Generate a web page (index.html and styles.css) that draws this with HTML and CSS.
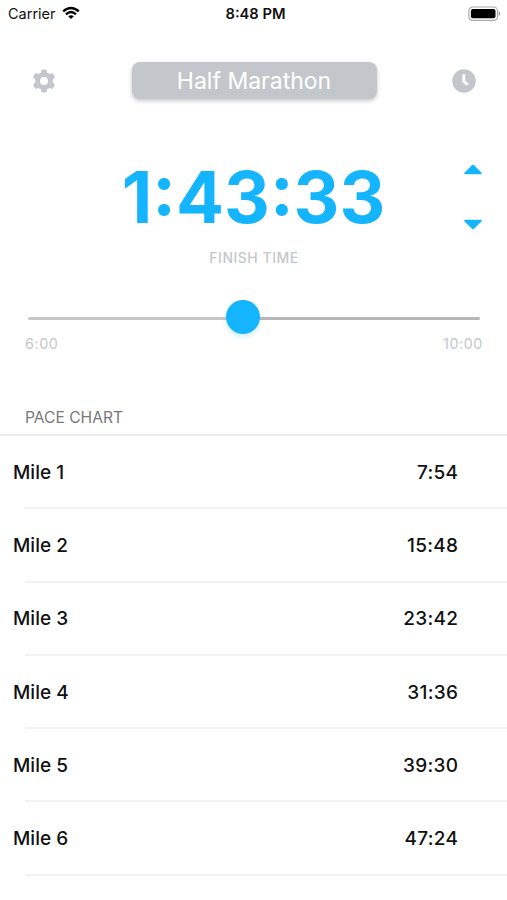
FILE: index.html
```html
<!DOCTYPE html>
<html lang="en">
<head>
<meta charset="utf-8">
<title>Race Pace</title>
<link rel="stylesheet" href="styles.css">
</head>
<body>
<div class="status">
  <div class="carrier"><span>Carrier</span>
    <svg width="18" height="14" viewBox="0 0 18 14" fill="none" stroke="#000" stroke-width="2.4"><path d="M1.2 5.3Q9 -1.5 16.8 5.3"/><path d="M4 8.3Q9 3.9 14 8.3"/><path d="M6.2 10.3Q9 8 11.8 10.3L9 13Z" fill="#000" stroke="none"/></svg>
  </div>
  <div class="clock">8:48 PM</div>
  <svg class="battery" width="33" height="16" viewBox="0 0 33 16"><rect x=".9" y="1" width="28.6" height="13.4" rx="3.8" fill="#fff" stroke="#aaa" stroke-width="1.2"/><rect x="2.9" y="3.1" width="24.6" height="9.2" rx="2" fill="#000"/><path d="M30.7 5.6Q32.3 6.2 32.3 7.8T30.7 10Z" fill="#999"/></svg>
</div>
<header class="toolbar">
  <svg width="24" height="24" viewBox="0 0 24 24" fill="#c3c7cb"><path fill-rule="evenodd" d="M9.5.8Q12 .1 14.5.8L15.1 3.7Q16.5 4.2 17.6 5.1L20.4 4.1Q22.2 6 22.9 8.5L20.7 10.5Q20.9 12 20.7 13.5L22.9 15.5Q22.2 18 20.4 19.9L17.6 18.9Q16.5 19.8 15.1 20.3L14.5 23.2Q12 23.9 9.5 23.2L8.9 20.3Q7.5 19.8 6.4 18.9L3.6 19.9Q1.8 18 1.1 15.5L3.3 13.5Q3.1 12 3.3 10.5L1.1 8.5Q1.8 6 3.6 4.1L6.4 5.1Q7.5 4.2 8.9 3.7ZM12 8A4 4 0 1 0 12 16A4 4 0 1 0 12 8Z"/></svg>
  <div class="race">Half Marathon</div>
  <svg width="24" height="24" viewBox="0 0 24 24"><circle cx="12" cy="12" r="11.8" fill="#c3c7cb"/><path d="M11.8 5.3V12.3L15.8 15.8" fill="none" stroke="#fff" stroke-width="2.8"/></svg>
</header>
<section class="finish">
  <div class="time">1:43:33</div>
  <div class="stepper">
    <svg width="18" height="11" viewBox="0 0 18 11"><path d="M.6 8.6L8 1.2Q9 .2 10 1.2L17.4 8.6Q18.4 10.2 16.8 10.2H1.2Q-.4 10.2.6 8.6Z" fill="#14b4ff"/></svg>
    <svg width="18" height="11" viewBox="0 0 18 11"><path d="M.6 2.4L8 9.8Q9 10.8 10 9.8L17.4 2.4Q18.4 .8 16.8 .8H1.2Q-.4 .8.6 2.4Z" fill="#14b4ff"/></svg>
  </div>
</section>
<div class="caption">FINISH TIME</div>
<div class="slider"><div class="track"></div><div class="thumb"></div></div>
<div class="range"><span>6:00</span><span>10:00</span></div>
<h2 class="heading"><span>PACE CHART</span></h2>
<ul class="list">
  <li><span>Mile 1</span><span class="split">7:54</span></li>
  <li><span>Mile 2</span><span class="split">15:48</span></li>
  <li><span>Mile 3</span><span class="split">23:42</span></li>
  <li><span>Mile 4</span><span class="split">31:36</span></li>
  <li><span>Mile 5</span><span class="split">39:30</span></li>
  <li><span>Mile 6</span><span class="split">47:24</span></li>
</ul>
</body>
</html>
```
FILE: styles.css
```css
* { box-sizing: border-box; }
body { margin: 0; height: 900px; overflow: hidden; background: #fff; color: #111; font-family: Inter, "Liberation Sans", sans-serif; }
svg { display: block; flex: none; }
.status { display: grid; grid-template-columns: 1fr auto 1fr; align-items: center; height: 26px; padding: 0 6px 0 8px; font-size: 14.5px; }
.carrier { display: flex; align-items: center; gap: 6px; }
.clock { padding: 2px 0 0 2px; font-weight: 600; font-size: 14.7px; }
.battery { justify-self: end; margin-top: 1px; }
.toolbar { display: flex; justify-content: space-between; align-items: center; height: 37px; margin-top: 36px; padding: 0 31px 0 32px; }
.race { width: 245px; height: 37px; border-radius: 8px; background: #c3c7cb; color: #fff; font-size: 23px; line-height: 38px; text-align: center; box-shadow: 0 2px 4px rgba(0, 0, 0, .22); }
.finish { display: grid; grid-template-columns: 1fr 260px 1fr; height: 84px; margin-top: 56px; }
.time { grid-column: 2; justify-self: center; color: #14b4ff; font-size: 71px; font-weight: 700; line-height: 84px; white-space: nowrap; }
.stepper { display: flex; flex-direction: column; justify-content: space-between; justify-self: end; height: 66px; margin: 9px 25px 0 0; }
.caption { height: 20px; margin-top: 9px; padding-left: 1px; color: #c3c7cb; font-size: 14px; font-weight: 500; line-height: 20px; letter-spacing: .5px; text-align: center; }
.slider { display: grid; align-items: center; height: 34px; margin: 32px 27px 0 28px; }
.track, .thumb { grid-area: 1 / 1; }
.track { height: 3px; margin-top: 2px; border-radius: 2px; background: linear-gradient(90deg, #c5c7c9 50%, #b7b7b9 50%); }
.thumb { width: 34px; height: 34px; margin-left: 198.4px; border-radius: 50%; background: #14b4ff; box-shadow: 0 3px 5px rgba(20, 180, 255, .2); }
.range { display: flex; justify-content: space-between; height: 18px; padding: 0 24px 0 25px; color: #c3c7cb; font-size: 14.3px; line-height: 19px; letter-spacing: .6px; }
.heading { height: 84px; margin: 0; padding: 56px 25px 0; border-bottom: 2px solid #eee; color: #77797b; font-size: 15.6px; font-weight: 400; line-height: 20px; }
.list { margin: 0; padding: 0; list-style: none; }
.list li { display: flex; justify-content: space-between; align-items: center; height: 73.3px; padding: 0 49px 1px 13px; font-size: 19px; font-weight: 500; background: linear-gradient(#f3f3f4, #f3f3f4) 25px 100% / 100% 2px no-repeat; }
.split { margin-right: -.3px; letter-spacing: .3px; }
```
